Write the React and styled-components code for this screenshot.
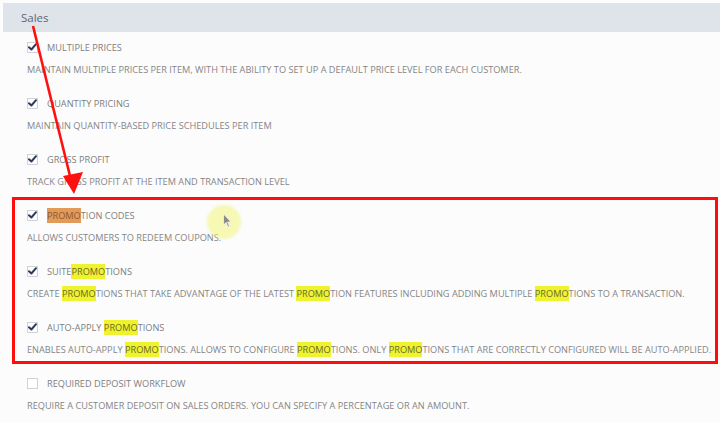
import React from "react";
import styled, { createGlobalStyle } from "styled-components";

const Global = createGlobalStyle`
  html, body { margin: 0; padding: 0; background: #fcfcfc; }
  body { font-family: "Open Sans", "Liberation Sans", sans-serif; width: 720px; height: 423px; overflow: hidden; }
`;

const Page = styled.div`
  position: relative;
  width: 720px;
  height: 423px;
  padding: 3px 0 0 3px;
  box-sizing: border-box;
  background: #fcfcfc;
`;

const Header = styled.div`
  height: 29px;
  background: #dfe4eb;
  display: flex;
  align-items: center;
  padding-left: 18px;
  font-size: 11.5px;
  color: #5c6676;
`;

const List = styled.div`
  display: flex;
  flex-direction: column;
  padding: 9px 0 0 24px;
`;

const Item = styled.div`
  display: flex;
  flex-direction: column;
  gap: 8px;
  height: 56px;
`;

const LabelRow = styled.div`
  display: flex;
  align-items: center;
  gap: 9px;
  height: 14px;
`;

const Box = styled.span`
  width: 11px;
  height: 11px;
  box-sizing: border-box;
  border: 1px solid #cfd2d6;
  background: #fff;
  position: relative;
  top: -1px;
  display: flex;
  align-items: center;
  justify-content: center;
`;

const Label = styled.span`
  font-size: 9.2px;
  color: #7e7e7e;
  line-height: 14px;
  white-space: nowrap;
`;

const Desc = styled.div`
  font-size: 9.2px;
  color: #858585;
  line-height: 14px;
  white-space: nowrap;
`;

const Mark = styled.span`
  background: ${(p) => (p.$orange ? "#e49a57" : "#eef32e")};
  color: ${(p) => (p.$orange ? "#8a5a35" : "#6d6a2a")};
  padding: 1px 0;
`;

const RedFrame = styled.div`
  position: absolute;
  left: 12px;
  top: 197px;
  width: 706px;
  height: 167px;
  box-sizing: border-box;
  border: 3px solid #ff0d0d;
  pointer-events: none;
`;

const Overlay = styled.svg`
  position: absolute;
  left: 0;
  top: 0;
  pointer-events: none;
`;

const Glow = styled.div`
  position: absolute;
  left: 207px;
  top: 205px;
  width: 34px;
  height: 34px;
  border-radius: 50%;
  background: rgba(240, 244, 120, 0.55);
  filter: blur(1.5px);
`;

function Check() {
  return (
    <svg width="9" height="8" viewBox="0 0 9 8">
      <path d="M1 4.2 L3.4 6.5 L8 1.2" fill="none" stroke="#2c3a5e" strokeWidth="2" strokeLinecap="round" strokeLinejoin="round" />
    </svg>
  );
}

function Rich({ text, orange }) {
  const parts = text.split("{P}");
  return parts.map((p, i) => (
    <React.Fragment key={i}>
      {i > 0 && <Mark $orange={orange}>PROMO</Mark>}
      {p}
    </React.Fragment>
  ));
}

const items = [
  { label: "MULTIPLE PRICES", desc: "MAINTAIN MULTIPLE PRICES PER ITEM, WITH THE ABILITY TO SET UP A DEFAULT PRICE LEVEL FOR EACH CUSTOMER.", checked: true },
  { label: "QUANTITY PRICING", desc: "MAINTAIN QUANTITY-BASED PRICE SCHEDULES PER ITEM", checked: true },
  { label: "GROSS PROFIT", desc: "TRACK GROSS PROFIT AT THE ITEM AND TRANSACTION LEVEL", checked: true },
  { label: "{P}TION CODES", desc: "ALLOWS CUSTOMERS TO REDEEM COUPONS.", checked: true, orange: true },
  { label: "SUITE{P}TIONS", desc: "CREATE {P}TIONS THAT TAKE ADVANTAGE OF THE LATEST {P}TION FEATURES INCLUDING ADDING MULTIPLE {P}TIONS TO A TRANSACTION.", checked: true },
  { label: "AUTO-APPLY {P}TIONS", desc: "ENABLES AUTO-APPLY {P}TIONS. ALLOWS TO CONFIGURE {P}TIONS. ONLY {P}TIONS THAT ARE CORRECTLY CONFIGURED WILL BE AUTO-APPLIED.", checked: true },
  { label: "REQUIRED DEPOSIT WORKFLOW", desc: "REQUIRE A CUSTOMER DEPOSIT ON SALES ORDERS. YOU CAN SPECIFY A PERCENTAGE OR AN AMOUNT.", checked: false },
];

export default function App() {
  return (
    <>
      <Global />
      <Page>
        <Header>Sales</Header>
        <List>
          {items.map((it, i) => (
            <Item key={i}>
              <LabelRow>
                <Box>{it.checked && <Check />}</Box>
                <Label><Rich text={it.label} orange={it.orange} /></Label>
              </LabelRow>
              <Desc><Rich text={it.desc} /></Desc>
            </Item>
          ))}
        </List>
        <RedFrame />
        <Glow />
        <Overlay width="720" height="423" viewBox="0 0 720 423">
          <line x1="33" y1="26" x2="71" y2="180" stroke="#ff1010" strokeWidth="2.6" />
          <polygon points="63,176 83,172 74,194" fill="#ff1010" />
          <path d="M223.5 214 L223.5 225 L226 222.5 L228 227 L229.5 226.3 L227.6 222 L231 222 Z" fill="#8a8a8a" stroke="#f4f4f4" strokeWidth="0.8" />
        </Overlay>
      </Page>
    </>
  );
}
